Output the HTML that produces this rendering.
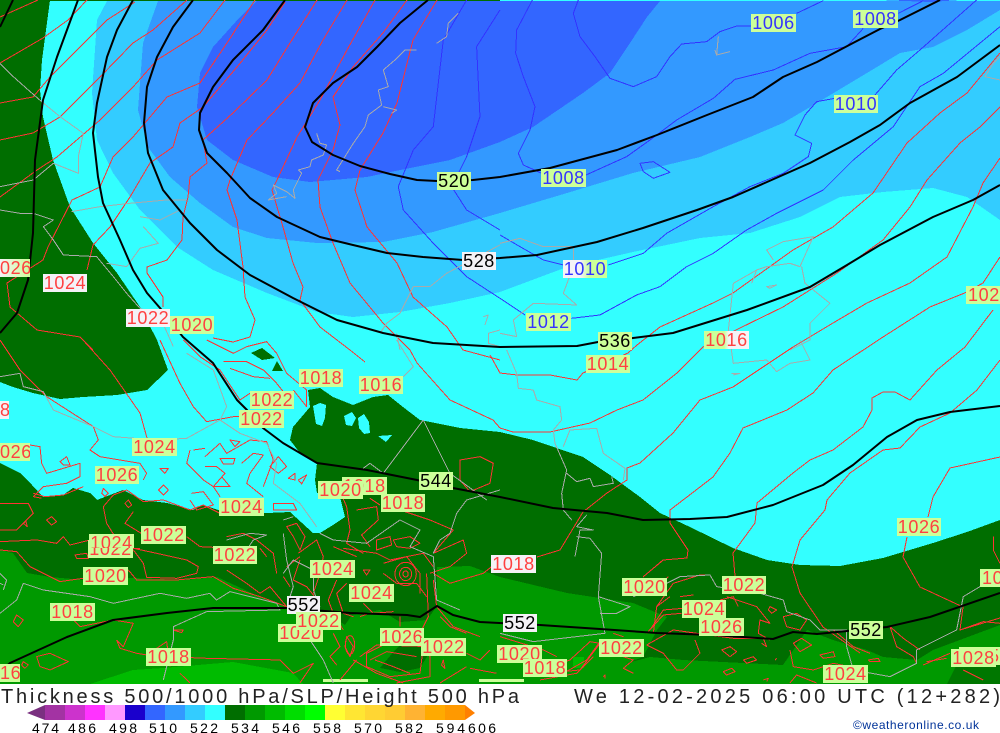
<!DOCTYPE html>
<html><head><meta charset="utf-8"><style>
html,body{margin:0;padding:0;background:#fff;width:1000px;height:733px;overflow:hidden}
svg{position:absolute;left:0;top:0}
.l{position:absolute;height:18px;line-height:19px;background:#ccff99;font:18px/19px "Liberation Sans",sans-serif;letter-spacing:.6px;text-align:center;overflow:hidden;white-space:nowrap;color:#ff4040}
.b{color:#3333ff}.k{color:#000}.w{background:#f4f2f6}
.z{fill:none;stroke-linejoin:round}
.z *{vector-effect:non-scaling-stroke}
.R{stroke:#ff3333;stroke-width:1;fill:none;shape-rendering:crispEdges}
.R *{shape-rendering:crispEdges}
.B{stroke:#3333ff;stroke-width:1;fill:none;shape-rendering:crispEdges}
.G{stroke:#aaaaaa;stroke-width:1;fill:none;shape-rendering:crispEdges}
.K{stroke:#000;stroke-width:2;fill:none}
</style></head><body>
<svg width="1000" height="733" viewBox="0 0 1000 733">
<rect x="0" y="0" width="1000" height="684" fill="#33ffff"/>
<g shape-rendering="crispEdges">
<polygon fill="#33ccff" points="107,1 97,20 92,93 97,140 113,173 140,210 177,247 213,270 267,293 317,312 353,317 400,312 450,303 500,292 567,267 633,252 700,238 750,233 800,217 840,197 883,192 933,188 967,197 1000,220 1000,1"/>
<polygon fill="#3399ff" points="158,1 143,43 138,110 148,147 170,177 200,203 233,227 267,238 317,243 383,242 433,232 500,213 567,193 633,173 700,157 750,137 783,123 817,103 867,73 900,53 933,47 967,30 1000,10 1000,1"/>
<polygon fill="#3366ff" points="257,1 240,17 213,47 200,73 197,107 207,140 233,160 273,177 310,182 367,177 400,170 450,160 500,142 533,127 583,93 610,73 630,43 647,17 660,1"/>
<polygon fill="#3366ff" points="880,0 960,0 930,2"/>
<polygon fill="#006e00" points="50,0 42,60 40,90 43,117 53,160 70,207 93,243 117,273 140,307 157,340 168,370 147,390 117,395 83,397 60,399 33,393 13,387 0,382 0,0"/>
<rect x="0" y="0" width="500" height="1" fill="#006e00"/>
<polygon fill="#006e00" points="0,463 20,473 32,485 43,497 63,495 73,488 90,493 97,500 123,490 143,500 167,503 193,510 203,505 227,513 267,513 290,512 313,533 320,533 333,525 345,517 340,497 317,493 315,480 317,463 300,453 290,440 293,427 310,407 308,390 320,388 333,397 353,405 373,397 388,395 403,407 420,420 460,428 500,432 533,440 583,457 610,475 640,497 660,513 690,527 733,548 767,560 800,565 840,566 883,558 933,543 967,532 1000,520 1000,684 0,684"/>
<polygon points="313,406 320,403 326,405 325,418 322,426 316,424" fill="#33ffff"/>
<polygon points="344,416 352,412 356,418 352,426 346,425" fill="#33ffff"/>
<polygon points="358,418 364,414 369,422 370,433 364,434 359,428" fill="#33ffff"/>
<polygon points="378,436 392,435 386,442" fill="#33ffff"/>
<polygon points="251,353 262,348 275,358 262,360" fill="#006e00"/>
<polygon points="277,361 283,371 272,371" fill="#006e00"/>
<polygon fill="#009900" points="0,550 13,553 27,573 50,577 83,580 133,578 183,580 217,577 260,597 287,607 317,607 345,625 352,615 380,610 400,622 427,620 437,606 437,567 470,566 500,577 567,593 633,603 667,617 657,630 643,657 627,663 650,657 683,660 783,665 807,630 833,640 867,650 883,657 917,660 933,650 1000,625 1000,684 0,684"/>
<polygon fill="#006e00" points="380,668 395,650 405,640 420,628 428,655 420,668 400,672"/>
<polygon fill="#00bb00" points="90,684 133,670 163,668 233,662 293,673 303,684"/>
<rect x="573" y="657" width="11" height="11" fill="#00bb00"/>
<polygon fill="#007700" points="947,684 960,658 1000,650 1000,684"/>
<rect x="323" y="679" width="45" height="3" fill="#ccff99"/>
<rect x="479" y="679" width="45" height="3" fill="#ccff99"/>
<rect x="0" y="684" width="1000" height="49" fill="#fff"/>
</g>

<!-- blue isobars -->
<g class="z" transform="translate(500,0) scale(.3333)">
<path class="B" d="M97,0L50,90L47,160L70,230L105,320L90,390L55,460L70,495L125,520"/>
<path class="B" d="M235,0L220,40L240,110L285,170L330,235L400,260L470,230L510,170L545,132L620,125L660,95L710,78L755,78"/>
<path class="B" d="M890,40L970,2"/>
<path class="B" d="M1195,40L1270,2"/>
<path class="B" d="M258,525L380,470L450,420L530,360L640,295L705,238L820,210L930,160L1040,140L1090,85"/>
<path class="B" d="M1005,295L950,305L915,345L885,405L935,430L925,470L850,520L750,560L640,620L500,700L430,760L325,795"/>
<path class="B" d="M1125,285L1190,210L1260,150L1430,0"/>
<path class="B" d="M420,490L460,485L510,517L460,535L430,515Z"/>
<path class="B" d="M0,705L60,740L130,780L190,795"/>
<path class="B" d="M0,895L75,945"/>
<path class="B" d="M215,955L300,945L410,885L480,860L560,800L640,760L740,690L830,640L970,570L1060,480L1180,380L1260,260L1330,220L1500,80"/>
</g>
<g class="z" transform="scale(.3333)">
<path class="B" d="M1400,0L1330,120L1300,380L1240,450L1195,560L1210,630L1300,730L1400,830L1500,895"/>
<path class="B" d="M1500,30L1430,140L1440,350L1400,470L1355,560L1400,630L1500,690"/>
</g>

<!-- red isobars top -->
<g class="R">
<polyline points="38,0 0,17"/>
<polyline points="87,0 68,20 43,38 0,63"/>
<polyline points="135,2 107,20 87,40 50,77 33,97 0,103"/>
<polyline points="187,0 153,30 133,43 100,77 60,117 33,133 0,140"/>
<polyline points="225,0 200,33 157,60 133,87 100,120 57,157 37,170 0,197"/>
<polyline points="255,0 227,43 200,83 167,97 133,137 113,157 100,187 72,200 48,247 43,260 7,283 10,307 37,330 80,337 93,350"/>
<polyline points="285,2 267,30 237,67 203,107 180,123 173,147 150,163 130,197 110,227 93,245 87,270"/>
<polyline points="317,0 290,43 267,80 233,113 203,140 207,163 190,177 188,197 183,217 182,240 167,260 147,267 147,273 163,297 163,307"/>
<polyline points="347,0 323,40 300,83 273,113 247,140 230,180 227,190 237,220 243,267 245,297 255,320 250,337 233,342 213,338"/>
<polyline points="375,0 347,50 320,100 297,137 277,180 272,190 283,227 293,263 303,287 300,300 320,327 350,350 365,362"/>
<polyline points="407,0 383,33 353,67 333,97 340,125 333,150 318,180 320,207 333,243 350,283 383,323 410,350 417,363 450,400 493,420 500,428"/>
<polyline points="437,0 413,40 397,103 383,133 360,170 355,190 367,227 397,263 413,297 447,327 463,350 500,360"/>
<polyline points="1000,53 967,93 940,113 907,143 873,193 833,227 793,250 733,293 713,303 660,327 637,345 628,353 583,373 577,380 550,375 517,375 500,373 490,355"/>
<polyline points="1000,107 980,127 960,143 927,180 910,207 883,240 837,273 783,307 740,328 703,347 677,373 643,400 617,410 590,423 550,432 513,432 500,428"/>
<polyline points="1000,158 983,183 973,207 947,257 910,283 867,303 833,323 793,347 733,387 700,400 673,433 640,463 627,468 627,480 607,493 583,512 560,550 537,557"/>
<polyline points="1000,257 983,283 967,292 930,307 883,337 833,370 813,393 787,410 743,428 730,453 713,477 700,487 670,510 670,523 688,550 687,558 663,560 643,577"/>
<polyline points="993,310 965,347 937,370 910,400 895,392 883,392 872,398 872,410 863,427 833,450 810,460 793,473 757,503 755,523 733,553 735,576"/>
<polyline points="1000,360 977,390 950,413 920,427 900,448 883,450 850,473 827,500 825,510 800,540 792,567 800,593 823,627 860,653"/>
<polyline points="1000,457 950,468 933,497 928,517"/>
<polyline points="907,537 903,557 920,587 963,607 960,630 1000,618"/>
<polyline points="83,340 110,370 140,413 147,438"/>
</g>

<!-- red wiggles lower-left crop coordinates -->
<g class="z" transform="translate(0,340) scale(.3333)">
<path class="R" d="M0,0L60,90L140,170L280,260L295,300L270,330L300,350L420,370L440,400L430,420"/>
<path class="R" d="M90,315L120,320L125,370L140,400L240,370L240,410L200,430L130,440L100,470L125,475"/>
<path class="R" d="M480,0L540,130L580,200L620,245L700,230L750,230"/>
<path class="R" d="M550,0L600,50L660,90L720,180L750,160"/>
<path class="R" d="M620,0L700,40L740,20L800,5L830,40L860,100L920,150L920,200L880,150"/>
<path class="R" d="M670,65L740,65L790,90L830,130L870,180"/>
<path class="R" d="M690,85L760,110L810,115"/>
<path class="R" d="M580,330L615,325M615,350L660,310L680,340L750,300L800,305L820,360L790,440"/>
<path class="R" d="M615,380L650,380L675,400L640,440L690,440L665,410"/>
<path class="R" d="M690,300L720,305L705,320Z"/>
<path class="R" d="M660,355L705,355L700,372L670,372Z"/>
<path class="R" d="M725,370L760,340L790,345L750,400L740,430L790,470"/>
<path class="R" d="M570,330L560,370L610,420L640,440L660,470"/>
<path class="R" d="M835,350L860,380L835,400L810,380Z"/>
<path class="R" d="M865,415L885,400L885,420Z M895,420L920,405L905,432Z"/>
<path class="R" d="M480,385L505,385L495,400Z M475,450L490,435L505,450L490,465Z"/>
<path class="R" d="M310,445L325,460L315,470L305,460Z M180,365L200,350L210,375L190,375Z"/>
<path class="R" d="M575,460L610,455L640,495L590,510L570,480"/>
<path class="R" d="M820,490L880,490L890,510L820,510Z"/>
<path class="R" d="M100,460L135,470L190,465L250,440M310,500L340,465L380,450L430,485L490,480L570,510L610,495L660,520"/>
<path class="R" d="M0,490L85,490L100,520L50,570L0,570"/>
<path class="R" d="M140,540L155,530L170,545L155,555Z M70,550L78,545L82,560Z M375,490L385,480L395,495L385,503Z"/>
<path class="R" d="M310,500L320,550L345,590L330,630L420,625M400,515L375,550L440,590"/>
<path class="R" d="M0,605L110,600L170,610L190,590L210,615L270,600"/>
<path class="R" d="M225,645L260,640L265,655L230,655Z"/>
<path class="R" d="M400,625L470,640L560,660L595,680L590,700L530,715L440,712L430,670L400,630"/>
<path class="R" d="M0,630L50,635L90,680L130,700L180,725L250,715"/>
<path class="R" d="M385,690L410,720L530,720L640,710L700,745L780,770L860,800"/>
<path class="R" d="M560,590L600,620L640,622"/>
<path class="R" d="M680,590L730,580L770,600L820,640L830,700M780,625L800,650"/>
<path class="R" d="M680,690L740,730L780,760L810,740L860,800"/>
<path class="R" d="M860,560L890,550L915,590L900,630L880,590Z"/>
<path class="R" d="M895,640L950,600L970,650L960,700L940,760"/>
<path class="R" d="M860,680L900,650M850,710L870,740"/>
<path class="R" d="M900,660L880,720L920,740L960,790"/>
<path class="R" d="M1010,430L1040,500L1050,570L1040,610L1090,640M1070,510L1130,500L1135,540L1085,585L1110,620"/>
<path class="R" d="M1110,475L1140,495M1130,600L1170,590L1175,615L1130,630Z"/>
<path class="R" d="M1180,600L1230,590L1260,610L1230,625L1190,620Z"/>
<path class="R" d="M1000,620L1070,650M1030,625L1130,640L1170,660L1270,640L1300,680"/>
<path class="R" d="M1090,690L1110,690L1100,705Z M1150,670L1220,650L1260,700L1260,760M1150,700L1190,730L1250,730L1280,770"/>
<ellipse class="R" cx="1217" cy="702" rx="32" ry="35"/>
<ellipse class="R" cx="1217" cy="702" rx="18" ry="20"/>
<ellipse class="R" cx="1217" cy="702" rx="8" ry="9"/>
<path class="R" d="M1010,720L985,780L1000,820L1030,870M1040,730L1010,760L1030,820L1060,830M1090,790L1120,820L1180,815"/>
<path class="R" d="M1280,700L1285,830L1260,880L1290,950M1300,640L1390,600L1400,640L1350,680L1290,700"/>
<path class="R" d="M1300,720L1310,800L1360,860L1440,890M1300,700L1350,730L1450,700L1500,660"/>
<path class="R" d="M1380,360L1440,350L1480,370L1470,430L1410,455L1380,420Z"/>
<path class="R" d="M1150,480L1200,510L1290,540L1360,570L1300,640"/>
<path class="R" d="M1320,830L1350,860L1400,880M1200,830L1200,860M1080,830L1110,820"/>
<path class="R" d="M50,825L70,840L55,860L40,845Z M110,950L150,940L205,965L150,990L120,980Z"/>
<path class="R" d="M70,965L85,975L75,985L65,975Z M350,900L370,920L400,850L340,840L240,860L220,840"/>
<path class="R" d="M350,900L360,925L410,940L440,945L500,905L510,980"/>
<path class="R" d="M500,950L620,955L840,960L880,1000L940,970L900,1029"/>
<path class="R" d="M520,870L550,870L545,878Z M540,1000L570,1029M1330,960L1325,975L1335,985Z"/>
<path class="R" d="M1000,880L1020,920L990,950L1010,975M1040,890L1060,920L1050,950L1035,920Z"/>
<path class="R" d="M1100,940L1180,900L1270,920L1260,1000L1170,1010L1100,980Z"/>
<path class="R" d="M1080,950L1130,915L1290,920L1290,1010L1190,1029M1060,960L1130,1000L1210,1029"/>
<path class="R" d="M1110,960L1160,935L1250,950M1125,960L1180,980L1230,1000M1020,1020L1070,960"/>
<path class="R" d="M1400,940L1440,960L1470,930M1410,985L1490,1000M1320,1029L1400,980"/>
<ellipse class="R" cx="1050" cy="915" rx="14" ry="28"/>
</g>

<!-- red wiggles lower-right crop coordinates -->
<g class="z" transform="translate(500,340) scale(.3333)">
<path class="R" d="M430,710L490,660M505,710L500,715M470,800L520,730L600,705L630,705"/>
<path class="R" d="M460,880L470,800L510,770M450,870L490,810L550,805M440,880L490,825L545,820M540,770L580,765"/>
<path class="R" d="M0,890L130,930L170,950M140,1000L240,990L300,910L270,905L210,960L140,985"/>
<path class="R" d="M190,1000L260,960L300,905M120,1020L230,1000L280,950"/>
<path class="R" d="M370,890L340,880M370,950L400,960L370,985L400,1000M310,1010L315,1005L315,1015"/>
<path class="R" d="M680,770L740,790L770,800L810,850L780,840L775,880L810,900"/>
<path class="R" d="M810,800L830,810L815,820L805,810Z"/>
<path class="R" d="M660,780L700,770L715,800"/>
<path class="R" d="M440,915L520,870L590,880L700,895L790,895L800,920L785,910"/>
<path class="R" d="M440,915L490,940L530,990L550,990L600,940L585,900"/>
<path class="R" d="M665,930L690,920L710,935L690,950Z M730,960L760,950L770,960L740,970Z M670,995L695,985L705,995L680,1005Z"/>
<path class="R" d="M850,830L890,820L920,840L900,870L860,860Z"/>
<path class="R" d="M880,910L905,895L935,915L900,935Z"/>
<path class="R" d="M870,930L880,980L940,990L1000,970L1100,990L1040,1029"/>
<path class="R" d="M960,945L1000,935L1005,950L970,955Z M1105,960L1135,955L1140,965L1110,965Z"/>
<path class="R" d="M1000,870L1060,920L1110,940M1170,860L1190,920L1240,950L1250,970M1170,860L1210,895L1260,930"/>
<path class="R" d="M1270,975L1350,940M1280,965L1340,955M1390,990L1450,1020M1380,870L1450,845L1500,850"/>
<path class="R" d="M1480,590L1480,630L1500,670"/>
<path class="R" d="M870,1029L890,1005L950,1029M790,1020L805,1015L800,1025"/>
<path class="R" d="M830,955L825,960"/>
</g>

<!-- grey coasts -->
<g class="z" transform="scale(.3333)">
<path class="G" d="M1375,40L1345,70L1340,110L1310,130"/>
<path class="G" d="M1250,150L1215,150L1185,180L1150,210L1165,260L1135,270L1145,315L1105,345L1095,380L1060,430L1010,510L1020,515"/>
<path class="G" d="M1150,320L1190,330L1175,340"/>
<path class="G" d="M950,400L960,430L980,435L970,465L935,480L930,500L895,510L905,520L880,570L885,595L860,575L820,555L830,580L805,600L860,590"/>
<path class="G" d="M0,190L40,230L85,270L125,305L180,350L250,400L235,470L235,520L160,490L100,540L0,560"/>
<path class="G" d="M0,630L60,640L100,640L160,660L130,680L160,720L190,765L290,770L340,830L380,880L420,925L480,950L520,1040"/>
<path class="G" d="M215,635L300,620L390,610L500,600L560,600"/>
<path class="G" d="M420,650L480,660L540,630M430,680L475,730L420,745L380,800L320,790"/>
<path class="G" d="M1450,950L1465,945L1455,975"/>
<path class="G" d="M1500,990L1465,1000L1465,1030L1500,1040"/>
<path class="G" d="M1240,860L1290,860L1340,820L1500,735M1240,860L1200,940L1160,970L1140,1000M1190,1000L1200,1050"/>
</g>
<g class="z" transform="translate(500,0) scale(.3333)">
<path class="G" d="M655,110L650,165L690,155M650,165L645,150"/>
<path class="G" d="M0,730L60,715L130,740L220,740L220,800L190,880L230,915L100,910L40,960L50,1010L0,1000"/>
<path class="G" d="M680,1040L700,850L770,810L800,800L870,790L900,800L940,710L850,725L800,750L820,780"/>
<path class="G" d="M770,810L755,850M800,860L830,855L810,865Z"/>
<path class="G" d="M905,800L915,850L990,910L930,970L930,1020L870,1050"/>
<path class="G" d="M1500,170L1480,190L1455,230L1500,240"/>
</g>
<g class="z" transform="translate(500,340) scale(.3333)">
<path class="G" d="M20,30L50,100L55,145L100,150L110,180L180,200L185,240L160,270L165,310L200,390L185,460L190,510L215,540"/>
<path class="G" d="M190,320L210,270L290,265L310,340L375,385L370,420"/>
<path class="G" d="M200,400L230,425L270,415L280,440L340,430L335,410"/>
<path class="G" d="M690,0L700,70L800,60L830,95L870,70L930,60L900,0M695,100L720,100L700,105"/>
<path class="G" d="M260,525L230,560L280,570L240,570L225,650M230,590L270,595L305,640L295,770L315,880L100,905L0,880"/>
<path class="G" d="M295,770L390,800L350,820L300,820"/>
<path class="G" d="M500,730L540,710L630,705L650,740L780,760L850,780L860,815L930,840L960,870L1040,870L1040,920L1060,990L1170,1010L1250,970L1250,930L1370,870L1390,770L1440,740L1500,730"/>
<path class="G" d="M400,770L500,730"/>
</g>
<g class="z" transform="translate(0,340) scale(.3333)">
<path class="G" d="M0,110L60,100L70,140L130,155L160,210L280,260L340,290L470,300L560,295L660,240L720,280L800,310L830,370L820,430L900,490L950,560"/>
<path class="G" d="M560,40L640,90L680,200L660,240"/>
<path class="G" d="M1190,0L1240,80L1210,110"/>
<path class="G" d="M0,820L50,780L70,730L130,750L270,770L340,790L480,760L560,775L630,760L650,780L690,755L830,790L840,810L620,815L520,860L520,900L490,1020"/>
<path class="G" d="M850,540L880,530M850,580L860,660L880,740L870,770M850,700L880,660L940,690L940,750L960,800"/>
<path class="G" d="M960,580L1000,600L1100,610L1200,540L1260,570L1230,620L1300,650L1310,780L1380,810"/>
<path class="G" d="M1500,450L1400,480L1370,520L1350,580L1320,600L1300,640"/>
<path class="G" d="M1090,385L1110,370L1150,400L1270,240M1270,240L1350,400L1460,480"/>
<path class="G" d="M680,600L750,580L800,585L760,600L740,630L680,620"/>
<path class="G" d="M920,800L930,900L970,960L1000,1029"/>
<path class="G" d="M0,700L20,720L10,750M0,730L10,735"/>
</g>

<!-- black height contours -->
<g class="K" stroke-linejoin="round">
<polyline points="428,0 400,23 377,47 357,67 333,83 313,103 305,127 312,142 333,155 360,166 390,174 417,180 437,181 473,180 500,177 550,168 617,150 657,135 707,115 753,97 783,77 817,62 853,43 880,29 900,20 940,0"/>
<polyline points="285,0 263,30 233,60 213,87 200,113 199,130 207,153 227,173 250,198 277,217 320,237 353,245 387,253 423,257 463,260 500,258 537,255 597,242 643,228 697,210 733,197 767,182 810,163 850,142 880,125 910,103 957,77 1000,45"/>
<polyline points="193,0 173,27 157,57 147,87 144,123 148,153 163,190 190,223 217,250 250,275 293,298 337,320 383,333 433,343 500,347 577,346 598,342 633,338 673,333 747,310 810,287 847,265 880,245 933,217 973,200 1000,185"/>
<polyline points="133,0 117,30 107,57 97,103 93,133 98,177 103,203 120,240 133,270 147,293 160,308 183,337 198,350 213,363 237,400 247,410 263,428 283,443 317,463 367,470 417,480 453,488 500,497 553,508 607,513 643,520 690,519 727,517 773,505 823,485 853,465 887,437 917,420 950,412 1000,406"/>
<polyline points="78,0 57,57 43,100 35,160 33,233 28,280 17,313 0,333"/>
<polyline points="13,0 0,27"/>
<polyline points="0,672 10,663 67,637 113,620 167,613 213,608 287,608 350,613 407,615 420,617 437,606 453,615 480,622 540,625 600,629 657,633 713,635 773,639 793,632 817,634 887,627 930,617 1000,593"/>
</g>

<!-- colorbar -->
<g shape-rendering="crispEdges">
<rect x="45" y="705" width="20" height="15" fill="#a333a3"/>
<rect x="65" y="705" width="20" height="15" fill="#cc33cc"/>
<rect x="85" y="705" width="20" height="15" fill="#ff33ff"/>
<rect x="105" y="705" width="20" height="15" fill="#ff99ff"/>
<rect x="125" y="705" width="20" height="15" fill="#1a00cc"/>
<rect x="145" y="705" width="20" height="15" fill="#3366ff"/>
<rect x="165" y="705" width="20" height="15" fill="#3399ff"/>
<rect x="185" y="705" width="20" height="15" fill="#33ccff"/>
<rect x="205" y="705" width="20" height="15" fill="#33ffff"/>
<rect x="225" y="705" width="20" height="15" fill="#006e00"/>
<rect x="245" y="705" width="20" height="15" fill="#009900"/>
<rect x="265" y="705" width="20" height="15" fill="#00bb00"/>
<rect x="285" y="705" width="20" height="15" fill="#00dd00"/>
<rect x="305" y="705" width="20" height="15" fill="#00ff00"/>
<rect x="325" y="705" width="20" height="15" fill="#ffff33"/>
<rect x="345" y="705" width="20" height="15" fill="#ffe633"/>
<rect x="365" y="705" width="20" height="15" fill="#ffd633"/>
<rect x="385" y="705" width="20" height="15" fill="#ffcc33"/>
<rect x="405" y="705" width="20" height="15" fill="#ffb333"/>
<rect x="425" y="705" width="20" height="15" fill="#ffaa00"/>
<rect x="445" y="705" width="20" height="15" fill="#ff9900"/>
</g>
<polygon points="27,713 45,705 45,720" fill="#7a3080"/>
<polygon points="465,705 475,713 465,720" fill="#ff8000"/>

<!-- title -->
<g font-family="'Liberation Sans',sans-serif" fill="#000">
<text x="1" y="703" font-size="20" textLength="518" lengthAdjust="spacing" fill="#222">Thickness 500/1000 hPa/SLP/Height 500 hPa</text>
<text x="574" y="703" font-size="20" textLength="426" lengthAdjust="spacing" fill="#222">We 12-02-2025 06:00 UTC (12+282)</text>
<g font-size="14">
<text x="32" y="733" textLength="27" lengthAdjust="spacing">474</text>
<text x="68" y="733" textLength="28" lengthAdjust="spacing">486</text>
<text x="109" y="733" textLength="28" lengthAdjust="spacing">498</text>
<text x="149" y="733" textLength="28" lengthAdjust="spacing">510</text>
<text x="190" y="733" textLength="28" lengthAdjust="spacing">522</text>
<text x="231" y="733" textLength="28" lengthAdjust="spacing">534</text>
<text x="272" y="733" textLength="28" lengthAdjust="spacing">546</text>
<text x="313" y="733" textLength="28" lengthAdjust="spacing">558</text>
<text x="354" y="733" textLength="28" lengthAdjust="spacing">570</text>
<text x="395" y="733" textLength="28" lengthAdjust="spacing">582</text>
<text x="436" y="733" textLength="29" lengthAdjust="spacing">594</text>
<text x="468" y="733" textLength="28" lengthAdjust="spacing">606</text>
</g>
<text x="853" y="729" font-size="12" fill="#003399" textLength="126" lengthAdjust="spacing">©weatheronline.co.uk</text>
</g>
</svg>

<!-- labels -->
<div class="l k" style="left:437px;top:172px;width:34px">520</div>
<div class="l k w" style="left:462px;top:252px;width:34px">528</div>
<div class="l w" style="left:0;top:259px;width:30px;text-align:right;background:linear-gradient(90deg,#f4f2f6,#ccff99)">026</div>
<div class="l w" style="left:43px;top:274px;width:44px">1024</div>
<div class="l w" style="left:126px;top:309px;width:44px">1022</div>
<div class="l" style="left:170px;top:316px;width:44px">1020</div>
<div class="l b" style="left:751px;top:14px;width:45px">1006</div>
<div class="l b" style="left:853px;top:10px;width:45px">1008</div>
<div class="l b" style="left:834px;top:95px;width:44px">1010</div>
<div class="l b" style="left:541px;top:169px;width:45px">1008</div>
<div class="l b" style="left:563px;top:260px;width:44px;background:linear-gradient(90deg,#f4f2f6 40%,#ccff99 60%)">1010</div>
<div class="l b" style="left:526px;top:313px;width:45px">1012</div>
<div class="l k" style="left:598px;top:332px;width:34px">536</div>
<div class="l" style="left:704px;top:331px;width:45px;background:linear-gradient(90deg,#ccff99 45%,#f4f2f6 55%)">1016</div>
<div class="l" style="left:966px;top:286px;width:34px;text-align:left;letter-spacing:.6px;padding-left:2px;box-sizing:border-box">102</div>
<div class="l" style="left:586px;top:355px;width:44px">1014</div>
<div class="l" style="left:299px;top:369px;width:44px">1018</div>
<div class="l" style="left:359px;top:376px;width:44px">1016</div>
<div class="l" style="left:250px;top:391px;width:44px">1022</div>
<div class="l" style="left:239px;top:410px;width:45px">1022</div>
<div class="l w" style="left:0;top:401px;width:9px;text-align:right">8</div>
<div class="l" style="left:0;top:443px;width:30px;text-align:right">026</div>
<div class="l" style="left:132px;top:438px;width:45px">1024</div>
<div class="l" style="left:95px;top:466px;width:44px">1026</div>
<div class="l" style="left:219px;top:498px;width:45px">1024</div>
<div class="l" style="left:342px;top:477px;width:45px">1018</div>
<div class="l" style="left:318px;top:481px;width:45px">1020</div>
<div class="l k" style="left:419px;top:472px;width:34px">544</div>
<div class="l" style="left:381px;top:494px;width:44px">1018</div>
<div class="l" style="left:141px;top:526px;width:45px">1022</div>
<div class="l" style="left:88px;top:540px;width:45px">1022</div>
<div class="l" style="left:89px;top:534px;width:45px;height:14px">1024</div>
<div class="l" style="left:213px;top:546px;width:44px">1022</div>
<div class="l" style="left:83px;top:567px;width:45px">1020</div>
<div class="l" style="left:310px;top:560px;width:45px">1024</div>
<div class="l" style="left:349px;top:584px;width:45px">1024</div>
<div class="l" style="left:50px;top:603px;width:45px">1018</div>
<div class="l k w" style="left:287px;top:596px;width:33px">552</div>
<div class="l" style="left:278px;top:624px;width:45px">1020</div>
<div class="l" style="left:296px;top:612px;width:45px">1022</div>
<div class="l" style="left:380px;top:628px;width:44px">1026</div>
<div class="l" style="left:421px;top:638px;width:45px">1022</div>
<div class="l" style="left:146px;top:648px;width:45px">1018</div>
<div class="l" style="left:0;top:664px;width:20px;text-align:right">16</div>
<div class="l w" style="left:491px;top:555px;width:45px">1018</div>
<div class="l k w" style="left:503px;top:614px;width:34px">552</div>
<div class="l" style="left:622px;top:578px;width:45px">1020</div>
<div class="l" style="left:722px;top:576px;width:44px">1022</div>
<div class="l" style="left:682px;top:600px;width:44px">1024</div>
<div class="l" style="left:699px;top:618px;width:45px">1026</div>
<div class="l k" style="left:849px;top:621px;width:34px">552</div>
<div class="l" style="left:599px;top:639px;width:45px">1022</div>
<div class="l" style="left:497px;top:645px;width:45px">1020</div>
<div class="l" style="left:523px;top:659px;width:44px">1018</div>
<div class="l" style="left:823px;top:665px;width:45px">1024</div>
<div class="l" style="left:959px;top:647px;width:41px;text-align:left;padding-left:30px;box-sizing:border-box">5</div>
<div class="l" style="left:951px;top:649px;width:45px">1028</div>
<div class="l" style="left:897px;top:518px;width:44px">1026</div>
<div class="l" style="left:980px;top:569px;width:20px;text-align:left;padding-left:2px;box-sizing:border-box">10</div>
</body></html>
